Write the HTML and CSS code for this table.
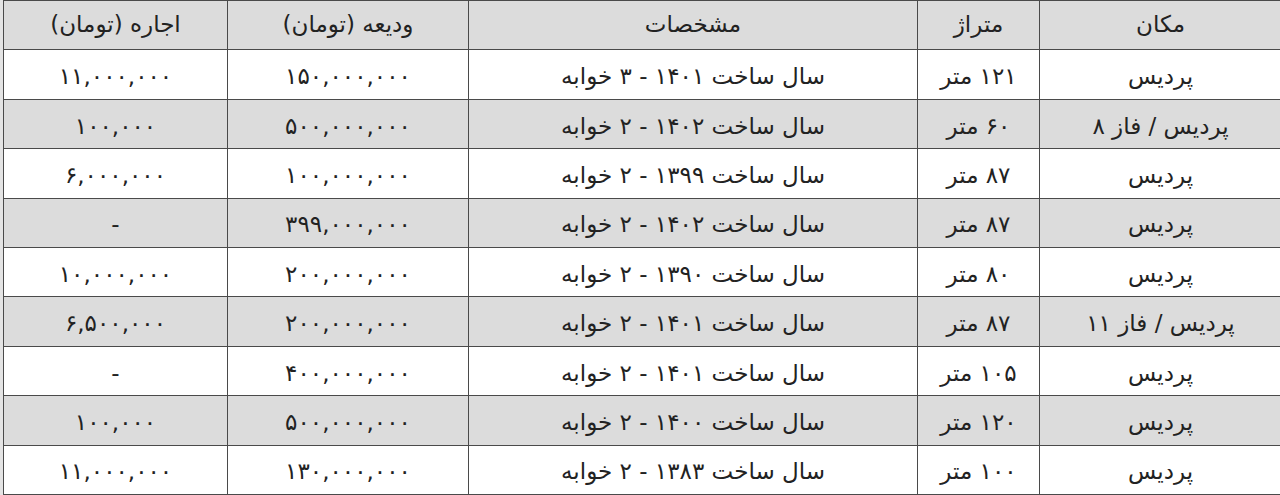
FILE: index.html
```html
<!DOCTYPE html>
<html lang="fa" dir="rtl">
<head>
<meta charset="utf-8">
<title>جدول اجاره پردیس</title>
<link rel="stylesheet" href="styles.css">
</head>
<body>
<div class="frame">
<table class="rent">
  <colgroup>
    <col class="c-loc"><col class="c-area"><col class="c-spec"><col class="c-dep"><col class="c-rent">
  </colgroup>
  <thead>
    <tr><th>مکان</th><th>متراژ</th><th>مشخصات</th><th>ودیعه (تومان)</th><th>اجاره (تومان)</th></tr>
  </thead>
  <tbody>
    <tr><td>پردیس</td><td>۱۲۱ متر</td><td>سال ساخت ۱۴۰۱ - ۳ خوابه</td><td>۱۵۰,۰۰۰,۰۰۰</td><td>۱۱,۰۰۰,۰۰۰</td></tr>
    <tr><td>پردیس / فاز ۸</td><td>۶۰ متر</td><td>سال ساخت ۱۴۰۲ - ۲ خوابه</td><td>۵۰۰,۰۰۰,۰۰۰</td><td>۱۰۰,۰۰۰</td></tr>
    <tr><td>پردیس</td><td>۸۷ متر</td><td>سال ساخت ۱۳۹۹ - ۲ خوابه</td><td>۱۰۰,۰۰۰,۰۰۰</td><td>۶,۰۰۰,۰۰۰</td></tr>
    <tr><td>پردیس</td><td>۸۷ متر</td><td>سال ساخت ۱۴۰۲ - ۲ خوابه</td><td>۳۹۹,۰۰۰,۰۰۰</td><td>-</td></tr>
    <tr><td>پردیس</td><td>۸۰ متر</td><td>سال ساخت ۱۳۹۰ - ۲ خوابه</td><td>۲۰۰,۰۰۰,۰۰۰</td><td>۱۰,۰۰۰,۰۰۰</td></tr>
    <tr><td>پردیس / فاز ۱۱</td><td>۸۷ متر</td><td>سال ساخت ۱۴۰۱ - ۲ خوابه</td><td>۲۰۰,۰۰۰,۰۰۰</td><td>۶,۵۰۰,۰۰۰</td></tr>
    <tr><td>پردیس</td><td>۱۰۵ متر</td><td>سال ساخت ۱۴۰۱ - ۲ خوابه</td><td>۴۰۰,۰۰۰,۰۰۰</td><td>-</td></tr>
    <tr><td>پردیس</td><td>۱۲۰ متر</td><td>سال ساخت ۱۴۰۰ - ۲ خوابه</td><td>۵۰۰,۰۰۰,۰۰۰</td><td>۱۰۰,۰۰۰</td></tr>
    <tr><td>پردیس</td><td>۱۰۰ متر</td><td>سال ساخت ۱۳۸۳ - ۲ خوابه</td><td>۱۳۰,۰۰۰,۰۰۰</td><td>۱۱,۰۰۰,۰۰۰</td></tr>
  </tbody>
</table>
</div>
</body>
</html>
```
FILE: styles.css
```css
html, body {
  margin: 0;
  padding: 0;
  background: #ffffff;
  overflow: hidden;
}

.frame {
  width: 1280px;
  height: 495px;
  overflow: hidden;
  direction: ltr;
  background: #e4e4e4;
}

.rent {
  direction: rtl;
  margin-left: 3px;
  width: 1278px;
  table-layout: fixed;
  border-collapse: collapse;
  font-family: "DejaVu Sans", "Noto Sans", sans-serif;
  font-size: 23px;
  line-height: 1.2;
  color: #222222;
  background: #ffffff;
}

.c-loc { width: 242px; }
.c-area { width: 122px; }
.c-spec { width: 449px; }
.c-dep { width: 241px; }
.c-rent { width: 224px; }

.rent th,
.rent td {
  box-sizing: border-box;
  height: 49.4px;
  padding: 0 4px;
  border: 1px solid #4a4a4a;
  text-align: center;
  vertical-align: middle;
  font-weight: normal;
  white-space: nowrap;
}

.rent td {
  padding-top: 5px;
}

.rent thead th {
  background: #dcdcdc;
}

.rent tbody tr:nth-child(even) td {
  background: #dcdcdc;
}
```
